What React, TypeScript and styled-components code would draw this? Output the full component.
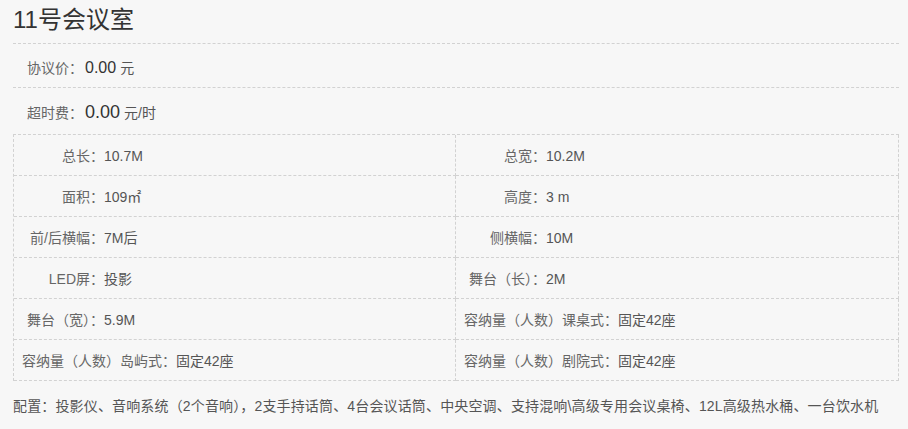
import React from 'react';
import styled, { createGlobalStyle } from 'styled-components';

const GlobalStyle = createGlobalStyle`
  html, body {
    margin: 0;
    padding: 0;
    background: #f7f7f7;
  }
  body {
    font-family: "Liberation Sans", "Noto Sans CJK SC", sans-serif;
    color: #555;
  }
`;

const Page = styled.div`
  padding: 0 9px 0 13px;
`;

const Title = styled.h2`
  margin: 0;
  height: 43px;
  line-height: 40px;
  font-size: 24px;
  font-weight: normal;
  color: #333;
  border-bottom: 1px dashed #d2d2d2;
`;

const PriceRow = styled.div<{ $last?: boolean }>`
  height: ${({ $last }) => ($last ? '44px' : '43px')};
  line-height: 48px;
  padding-left: 14px;
  font-size: 14px;
  color: #666;
  border-bottom: ${({ $last }) => ($last ? 'none' : '1px dashed #d2d2d2')};
`;

const PriceValue = styled.span<{ $big?: boolean }>`
  font-size: ${({ $big }) => ($big ? '18px' : '16px')};
  color: #333;
  margin-left: 2px;
`;

const Unit = styled.span`
  font-size: 14px;
  color: #555;
  margin-left: 4px;
`;

const SpecGrid = styled.div`
  margin-top: 2px;
  display: grid;
  grid-template-columns: 442px 1fr;
  border-top: 1px dashed #d2d2d2;
  border-left: 1px dashed #d2d2d2;
`;

const Cell = styled.div`
  height: 40px;
  line-height: 42px;
  padding-left: 8px;
  font-size: 14px;
  white-space: nowrap;
  border-right: 1px dashed #d2d2d2;
  border-bottom: 1px dashed #d2d2d2;
`;

const Label = styled.span`
  display: inline-block;
  min-width: 82px;
  text-align: right;
  color: #666;
`;

const Value = styled.span`
  color: #555;
`;

const Config = styled.p`
  margin: 14px 0 0;
  line-height: 22px;
  font-size: 14px;
  letter-spacing: 0.15px;
  color: #555;
  white-space: nowrap;
`;

const specs: [string, string][] = [
  ['总长：', '10.7M'],
  ['总宽：', '10.2M'],
  ['面积：', '109㎡'],
  ['高度：', '3 m'],
  ['前/后横幅：', '7M后'],
  ['侧横幅：', '10M'],
  ['LED屏：', '投影'],
  ['舞台（长）：', '2M'],
  ['舞台（宽）：', '5.9M'],
  ['容纳量（人数）课桌式：', '固定42座'],
  ['容纳量（人数）岛屿式：', '固定42座'],
  ['容纳量（人数）剧院式：', '固定42座'],
];

export default function App() {
  return (
    <>
      <GlobalStyle />
      <Page>
        <Title>11号会议室</Title>
        <PriceRow>
          协议价：<PriceValue>0.00</PriceValue>
          <Unit>元</Unit>
        </PriceRow>
        <PriceRow $last>
          超时费：<PriceValue $big>0.00</PriceValue>
          <Unit>元/时</Unit>
        </PriceRow>
        <SpecGrid>
          {specs.map(([label, value]) => (
            <Cell key={label}>
              <Label>{label}</Label>
              <Value>{value}</Value>
            </Cell>
          ))}
        </SpecGrid>
        <Config>
          配置：投影仪、音响系统（2个音响），2支手持话筒、4台会议话筒、中央空调、支持混响\高级专用会议桌椅、12L高级热水桶、一台饮水机
        </Config>
      </Page>
    </>
  );
}
